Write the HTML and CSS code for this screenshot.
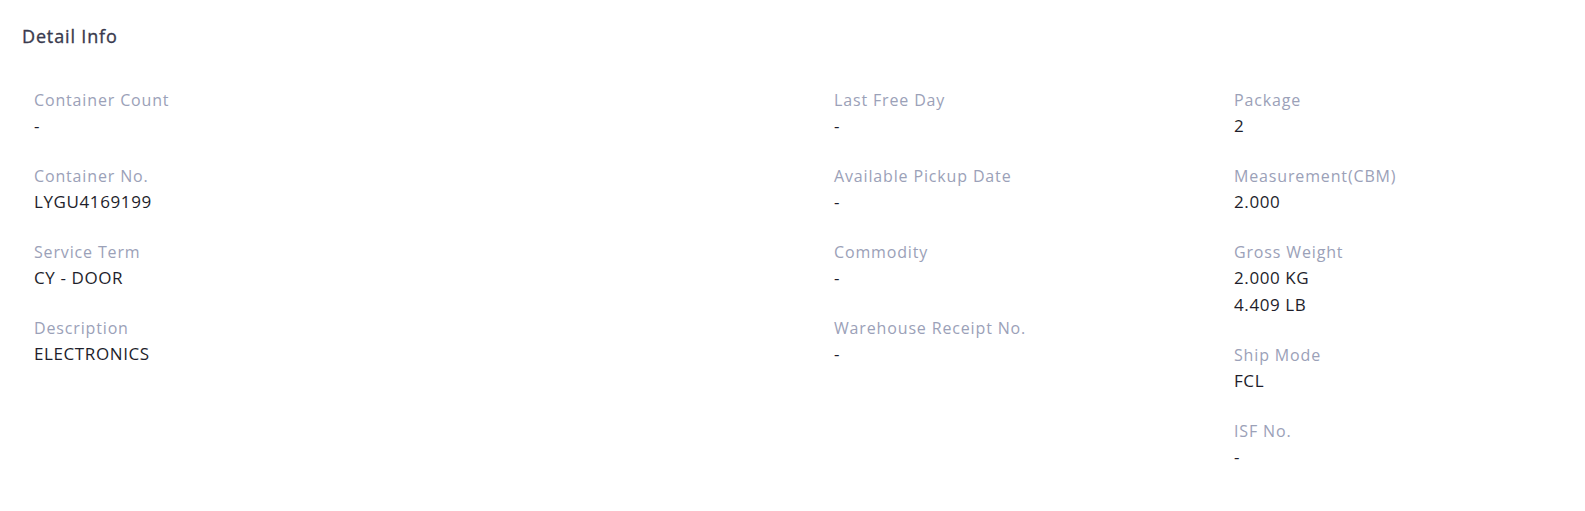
FILE: index.html
```html
<!DOCTYPE html>
<html lang="en">
<head>
<meta charset="utf-8">
<title>Detail Info</title>
<link rel="stylesheet" href="styles.css">
</head>
<body>
<section class="panel">
  <h2 class="panel-title">Detail Info</h2>
  <div class="grid">
    <div class="col">
      <div class="item"><div class="label">Container Count</div><div class="value">-</div></div>
      <div class="item"><div class="label">Container No.</div><div class="value">LYGU4169199</div></div>
      <div class="item"><div class="label">Service Term</div><div class="value">CY - DOOR</div></div>
      <div class="item"><div class="label">Description</div><div class="value">ELECTRONICS</div></div>
    </div>
    <div class="col">
      <div class="item"><div class="label">Last Free Day</div><div class="value">-</div></div>
      <div class="item"><div class="label">Available Pickup Date</div><div class="value">-</div></div>
      <div class="item"><div class="label">Commodity</div><div class="value">-</div></div>
      <div class="item"><div class="label">Warehouse Receipt No.</div><div class="value">-</div></div>
    </div>
    <div class="col">
      <div class="item"><div class="label">Package</div><div class="value">2</div></div>
      <div class="item"><div class="label">Measurement(CBM)</div><div class="value">2.000</div></div>
      <div class="item"><div class="label">Gross Weight</div><div class="value">2.000 KG</div><div class="value">4.409 LB</div></div>
      <div class="item"><div class="label">Ship Mode</div><div class="value">FCL</div></div>
      <div class="item"><div class="label">ISF No.</div><div class="value">-</div></div>
    </div>
  </div>
</section>
</body>
</html>
```
FILE: styles.css
```css
* { box-sizing: border-box; }
html, body { margin: 0; padding: 0; background: #ffffff; }
body { font-family: "Open Sans", "Noto Sans", sans-serif; }
.panel { padding: 24px 22px 20px 22px; }
.panel-title {
  margin: 0;
  font-size: 18px;
  line-height: 24px;
  font-weight: 400;
  letter-spacing: 0.85px;
  -webkit-text-stroke: 0.35px #3a3a4e;
  color: #3a3a4e;
}
.grid {
  display: grid;
  grid-template-columns: 800px 400px 1fr;
  padding: 40px 12px 0 12px;
}
.col { display: flex; flex-direction: column; gap: 25px; }
.label {
  font-size: 16px;
  line-height: 24px;
  letter-spacing: 0.85px;
  color: #9ba1b8;
}
.value {
  font-size: 17px;
  line-height: 27px;
  letter-spacing: 0.6px;
  color: #1e1e2b;
}
```
